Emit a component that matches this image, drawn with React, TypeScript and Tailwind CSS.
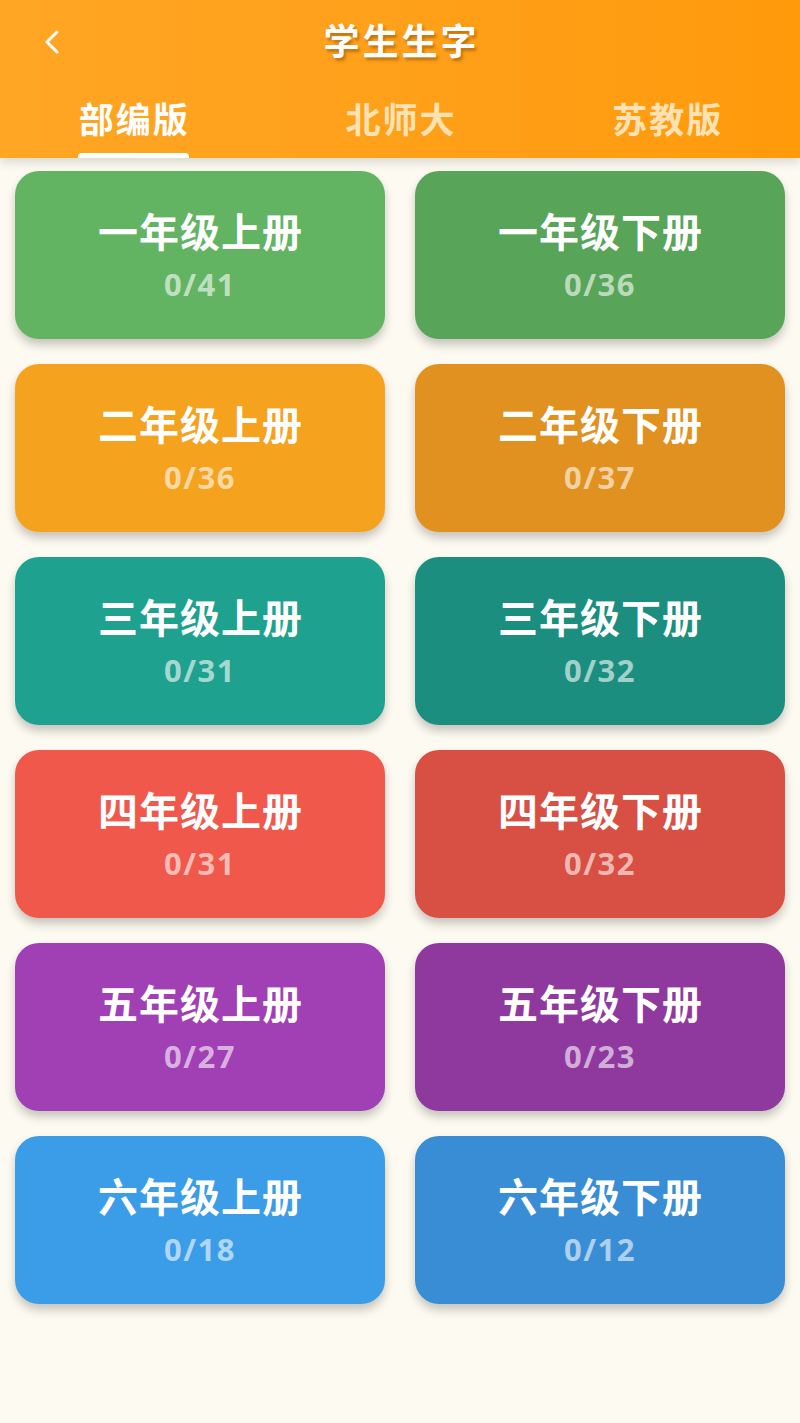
import React, { useState } from 'react';

const books = [
  { title: '一年级上册', done: 0, total: 41, bg: 'bg-[#62b462]' },
  { title: '一年级下册', done: 0, total: 36, bg: 'bg-[#58a458]' },
  { title: '二年级上册', done: 0, total: 36, bg: 'bg-[#f5a21f]' },
  { title: '二年级下册', done: 0, total: 37, bg: 'bg-[#e0911f]' },
  { title: '三年级上册', done: 0, total: 31, bg: 'bg-[#1fa190]' },
  { title: '三年级下册', done: 0, total: 32, bg: 'bg-[#1b8e80]' },
  { title: '四年级上册', done: 0, total: 31, bg: 'bg-[#ef584b]' },
  { title: '四年级下册', done: 0, total: 32, bg: 'bg-[#d84f43]' },
  { title: '五年级上册', done: 0, total: 27, bg: 'bg-[#a13fb5]' },
  { title: '五年级下册', done: 0, total: 23, bg: 'bg-[#8f399f]' },
  { title: '六年级上册', done: 0, total: 18, bg: 'bg-[#3b9ce8]' },
  { title: '六年级下册', done: 0, total: 12, bg: 'bg-[#388dd5]' },
];

const tabs = ['部编版', '北师大', '苏教版'];

const App = () => {
  const [active, setActive] = useState(0);

  return (
    <div className="min-h-[1423px] bg-[#fdfbf1] font-['Noto_Sans','Noto_Sans_CJK_SC',sans-serif]">
      {/* Header */}
      <header className="h-[158px] bg-gradient-to-r from-[#ffa624] to-[#ff9a0a] shadow-[0_4px_10px_rgba(0,0,0,0.15)] flex flex-col">
        <div className="relative h-[84px] flex items-center justify-center">
          <button className="absolute left-[40px] top-[28px] w-[24px] h-[28px] flex items-center justify-center">
            <svg width="20" height="26" viewBox="0 0 20 26" fill="none">
              <path d="M15 3 L5 13 L15 23" stroke="white" strokeWidth="3" strokeLinecap="round" strokeLinejoin="round" />
            </svg>
          </button>
          <h1 className="text-[36px] leading-[44px] font-bold text-white tracking-[3px] pl-[3px] [text-shadow:2px_3px_3px_rgba(120,60,0,0.45)]">
            学生生字
          </h1>
        </div>
        <nav className="flex-1 grid grid-cols-3">
          {tabs.map((tab, i) => (
            <button
              key={tab}
              onClick={() => setActive(i)}
              className="flex flex-col items-center justify-end"
            >
              <span
                className={`text-[35px] font-bold leading-[42px] tracking-[2px] pl-[2px] ${
                  i === active ? 'text-white' : 'text-[#ffe2b4]'
                }`}
              >
                {tab}
              </span>
              <span
                className={`mt-[12px] h-[5px] w-[111px] rounded-t-[4px] ${
                  i === active ? 'bg-white' : 'bg-transparent'
                }`}
              />
            </button>
          ))}
        </nav>
      </header>

      {/* Book grid */}
      <main className="grid grid-cols-2 gap-x-[30px] gap-y-[25px] px-[15px] pt-[13px]">
        {books.map((book) => (
          <div
            key={book.title}
            className={`${book.bg} h-[168px] rounded-[24px] shadow-[0_6px_10px_rgba(0,0,0,0.22)] flex flex-col items-center justify-center gap-[12px] pt-[2px]`}
          >
            <div className="text-[40px] leading-[44px] font-bold text-white tracking-[1px] pl-[1px]">
              {book.title}
            </div>
            <div className="text-[31px] leading-[36px] font-bold text-white/60 tracking-[1.5px]">
              {book.done}/{book.total}
            </div>
          </div>
        ))}
      </main>
    </div>
  );
};

export default App;
